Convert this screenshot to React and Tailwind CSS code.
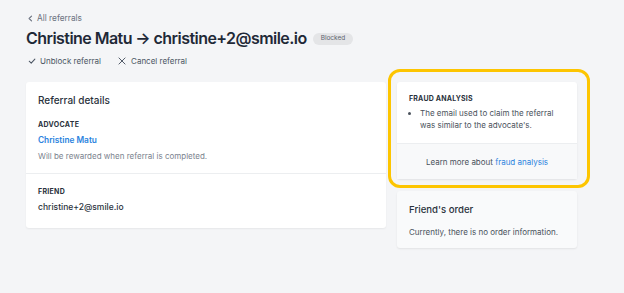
import React from "react";

function ChevronLeft() {
  return (
    <svg width="7" height="7" viewBox="0 0 10 10" fill="none" stroke="currentColor" strokeWidth="1.6" strokeLinecap="round" strokeLinejoin="round">
      <path d="M6.5 1.5 3 5l3.5 3.5" />
    </svg>
  );
}

function Check() {
  return (
    <svg width="8" height="8" viewBox="0 0 10 10" fill="none" stroke="currentColor" strokeWidth="1.3" strokeLinecap="round" strokeLinejoin="round">
      <path d="M1.5 5.3 4 7.6 8.6 2.6" />
    </svg>
  );
}

function XIcon() {
  return (
    <svg width="8" height="8" viewBox="0 0 10 10" fill="none" stroke="currentColor" strokeWidth="1.2" strokeLinecap="round">
      <path d="M1.2 1.2l7.6 7.6M8.8 1.2l-7.6 7.6" />
    </svg>
  );
}

export default function App() {
  return (
    <div
      className="w-[624px] h-[293px] bg-[#f4f5f7] text-[#212b36] overflow-hidden"
      style={{ fontFamily: "Inter, 'Noto Sans', sans-serif" }}
    >
      <div className="pl-[26px] pt-[13px]">
        <div className="flex items-center gap-[3px] text-[8.3px] text-[#6b7280] pl-[1px] h-[10px]">
          <ChevronLeft />
          <span>All referrals</span>
        </div>
        <div className="flex items-center mt-[5px] h-[20px]">
          <h1 className="text-[16px] font-semibold tracking-[-0.55px] text-[#1f2937] leading-none">
            Christine Matu → christine+2@smile.io
          </h1>
          <span className="ml-[6px] mt-[2px] rounded-full bg-[#e4e5e7] text-[#5c6470] text-[6.5px] px-[8px] h-[12px] flex items-center">
            Blocked
          </span>
        </div>
        <div className="flex items-center mt-[7px] h-[12px] text-[8px] text-[#4b5563]">
          <div className="flex items-center gap-[4px] pl-[2px]">
            <Check />
            <span>Unblock referral</span>
          </div>
          <div className="flex items-center gap-[5px] ml-[17px]">
            <XIcon />
            <span>Cancel referral</span>
          </div>
        </div>

        <div className="flex items-start gap-[11px] mt-[15px]">
          <div className="w-[360px] bg-white rounded-[3px] shadow-[0_1px_2px_rgba(0,0,0,0.06)]">
            <div className="px-[12px] pt-[12px] pb-[11px]">
              <div className="text-[10px] font-medium text-[#2a323c] h-[13px] leading-[13px]">Referral details</div>
              <div className="text-[7px] font-bold tracking-[0.3px] text-[#2a323c] mt-[13px] leading-[9px]">ADVOCATE</div>
              <div className="text-[8.3px] font-semibold text-[#2b83de] mt-[6px] leading-[11px]">Christine Matu</div>
              <div className="text-[8px] text-[#7b838e] mt-[5px] leading-[11px]">Will be rewarded when referral is completed.</div>
            </div>
            <div className="border-t border-[#eceef0] px-[12px] pt-[13px] pb-[15px]">
              <div className="text-[7px] font-bold tracking-[0.3px] text-[#2a323c] leading-[9px]">FRIEND</div>
              <div className="text-[8.5px] font-medium text-[#2a323c] mt-[6px] leading-[11px]">christine+2@smile.io</div>
            </div>
          </div>

          <div className="relative w-[180px] flex flex-col gap-[12px]">
            <div className="absolute left-[-9px] top-[-13px] w-[202px] h-[119px] rounded-[12px] border-[3px] border-[#fdc500]" />
            <div className="bg-white rounded-[3px] shadow-[0_1px_2px_rgba(0,0,0,0.08)]">
              <div className="px-[12px] pt-[12px] pb-[12px]">
                <div className="text-[7px] font-bold tracking-[0.2px] text-[#2a323c] leading-[9px]">FRAUD ANALYSIS</div>
                <ul className="mt-[4px] text-[8px] text-[#4a525c] leading-[12px] list-disc pl-[11px]">
                  <li>The email used to claim the referral was similar to the advocate's.</li>
                </ul>
              </div>
              <div className="bg-[#f8f9fa] border-t border-[#eceef0] h-[36px] flex items-center justify-center text-[8px] text-[#4a525c]">
                <span>
                  Learn more about <span className="text-[#2b83de]">fraud analysis</span>
                </span>
              </div>
            </div>
            <div className="bg-[#f9fafb] rounded-[3px] shadow-[0_1px_2px_rgba(0,0,0,0.08)] px-[12px] pt-[12px] pb-[10px]">
              <div className="text-[9.6px] font-medium text-[#2a323c] leading-[13px]">Friend's order</div>
              <div className="text-[8px] text-[#4a525c] mt-[11px] leading-[11px]">Currently, there is no order information.</div>
            </div>
          </div>
        </div>
      </div>
    </div>
  );
}
